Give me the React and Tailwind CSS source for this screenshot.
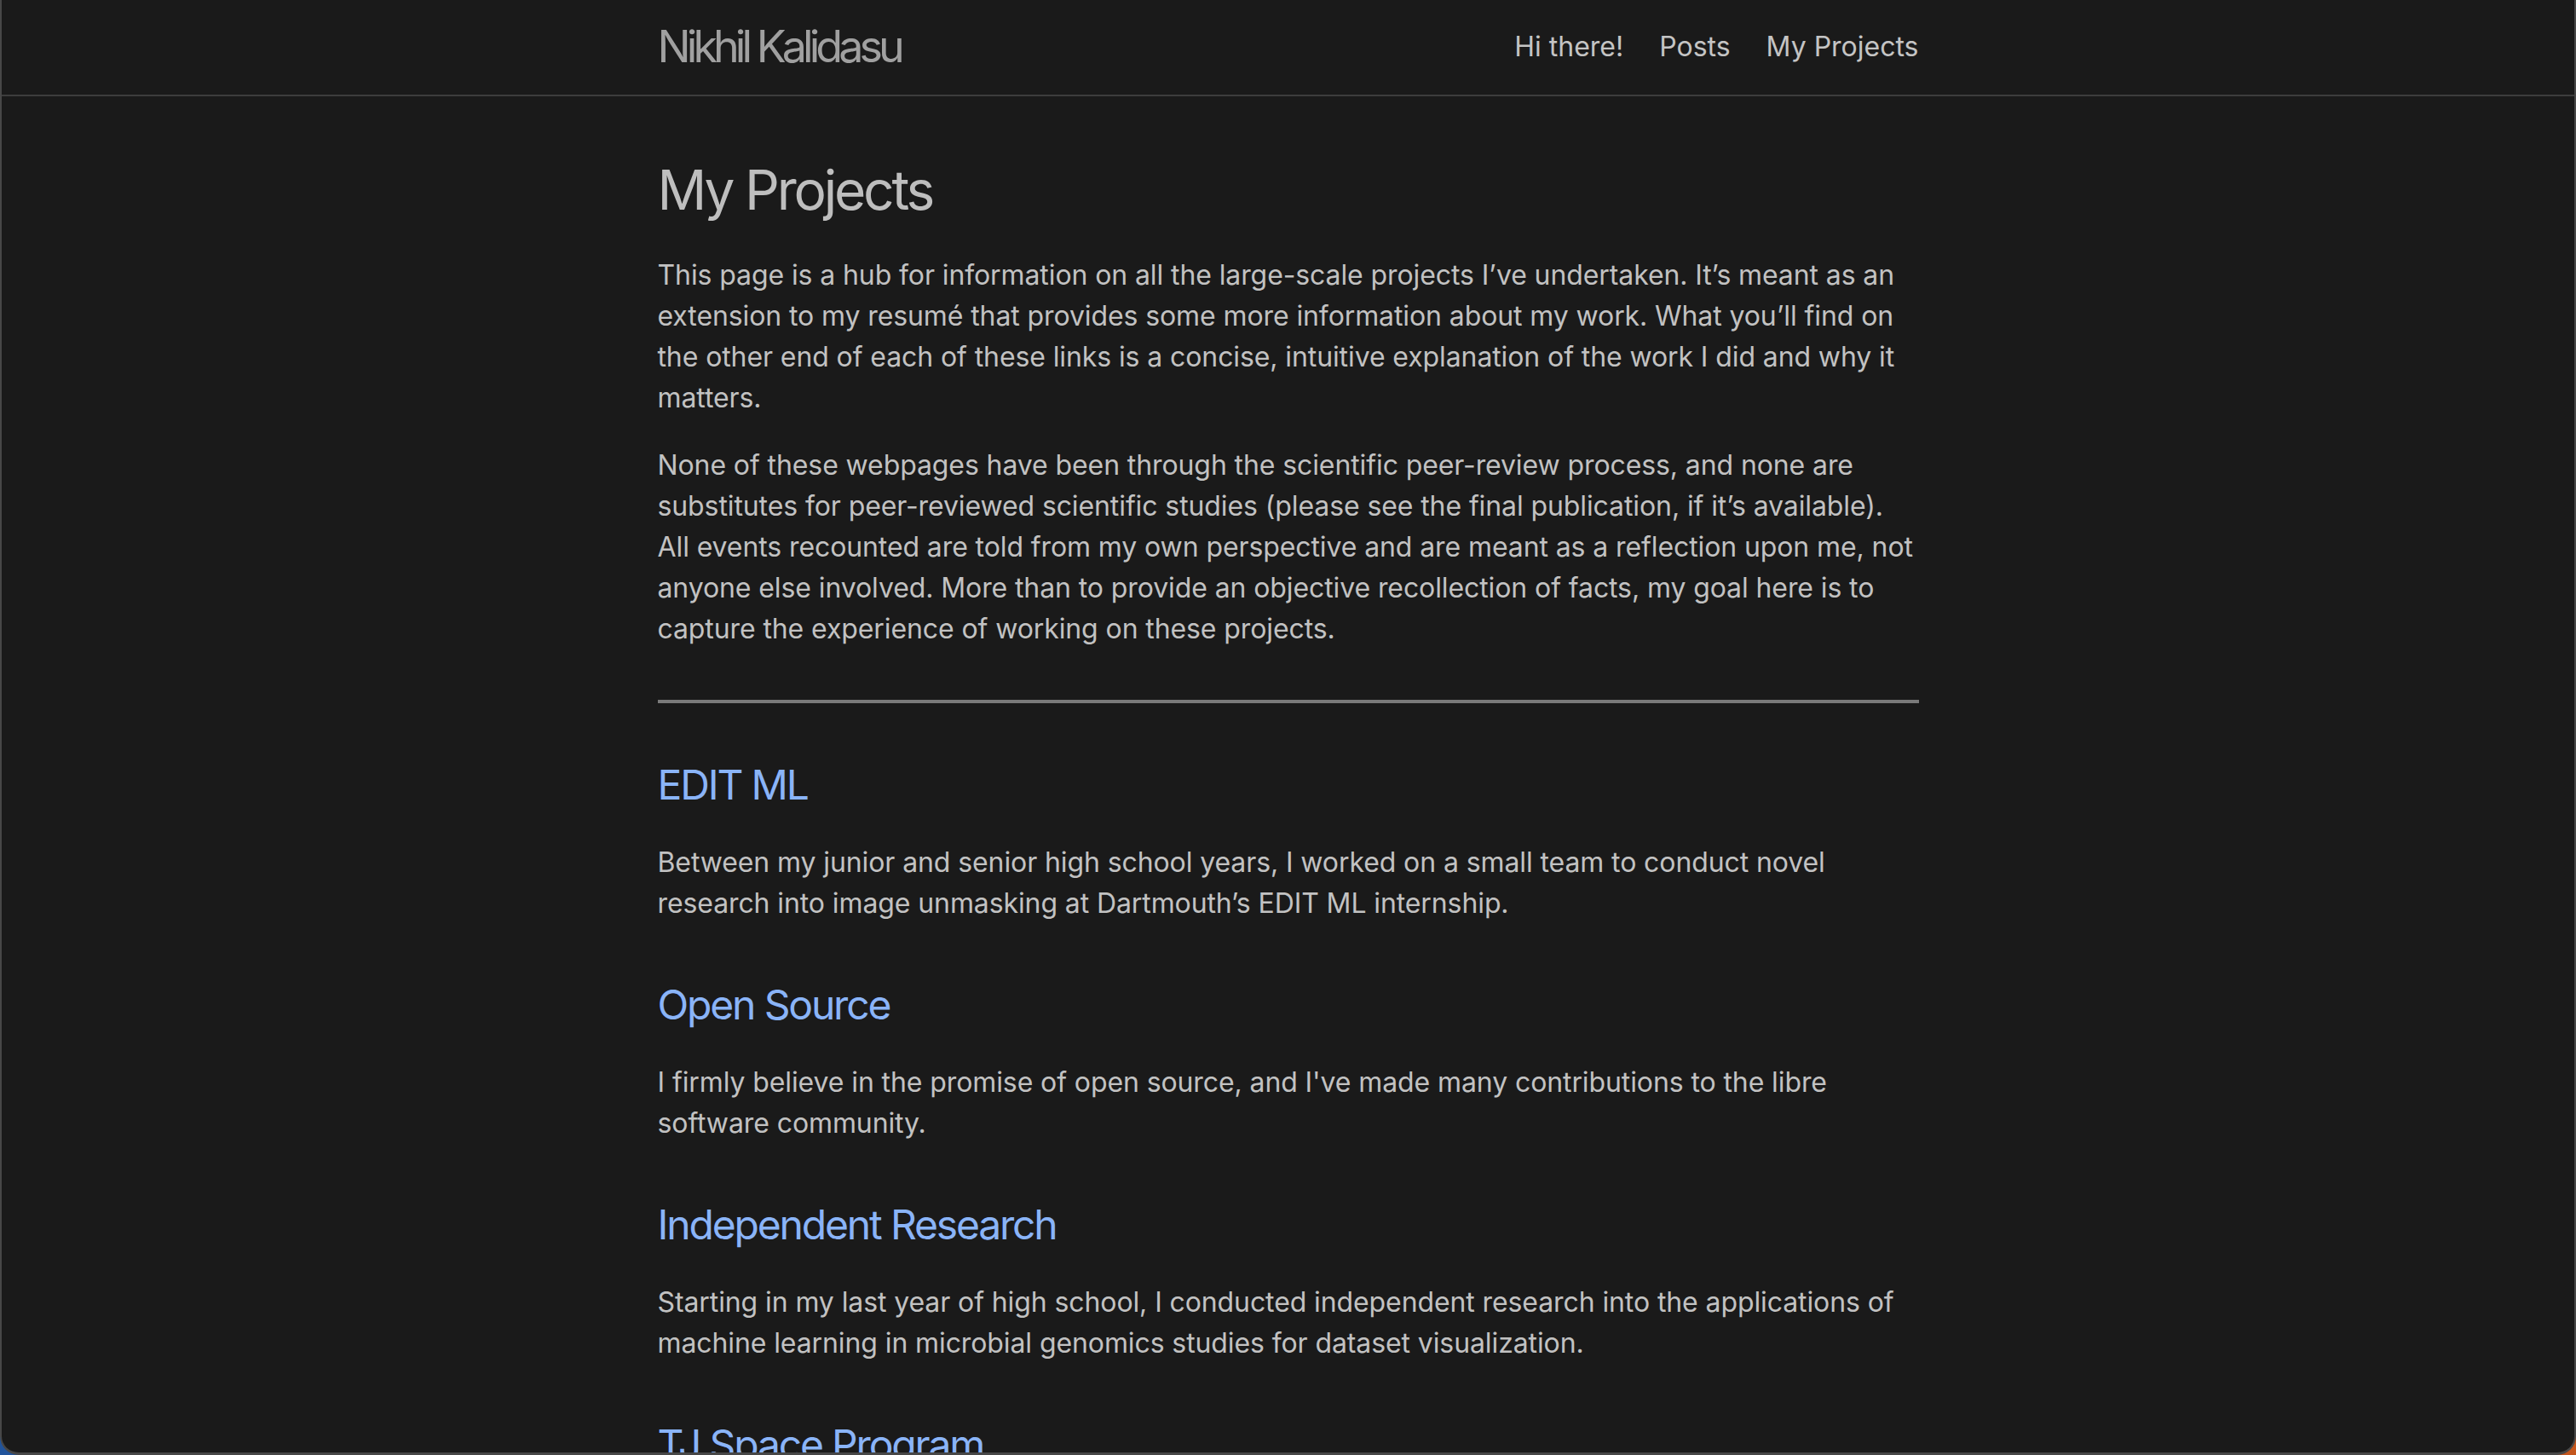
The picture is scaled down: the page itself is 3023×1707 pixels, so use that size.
import React from "react";

const sections = [
  {
    title: "EDIT ML",
    text: "Between my junior and senior high school years, I worked on a small team to conduct novel research into image unmasking at Dartmouth’s EDIT ML internship.",
  },
  {
    title: "Open Source",
    text: "I firmly believe in the promise of open source, and I've made many contributions to the libre software community.",
  },
  {
    title: "Independent Research",
    text: "Starting in my last year of high school, I conducted independent research into the applications of machine learning in microbial genomics studies for dataset visualization.",
  },
  {
    title: "TJ Space Program",
    text: "As a member of the TJ Space Program, I helped design and build satellites.",
  },
];

export default function App() {
  return (
    <div className="w-[3023px] h-[1707px] overflow-hidden bg-gradient-to-r from-[#21549c] via-[#5a4a6a] to-[#c4561c] font-[Inter,sans-serif]">
      <div className="w-full h-full bg-[#1a1a1a] border-l-2 border-r-2 border-b-[3px] border-[#474747] rounded-b-[22px] overflow-hidden flex flex-col">
        <header className="h-[113px] shrink-0 border-b-2 border-[#3d3d3d] pb-[2px]">
          <div className="w-[1480px] mx-auto h-full flex items-center justify-between">
            <a className="text-[52px] leading-none tracking-[-0.095em] text-[#a0a0a0]">Nikhil Kalidasu</a>
            <nav className="flex items-center gap-[42px] text-[32px] leading-none text-[#c4c4c4]">
              <a>Hi there!</a>
              <a>Posts</a>
              <a>My Projects</a>
            </nav>
          </div>
        </header>
        <main className="w-[1480px] mx-auto flex flex-col text-[#c2c2c2] tracking-[-0.1px]">
          <h1 className="mt-[71px] text-[64px] leading-[77px] tracking-[-0.05em] text-[#bebebe]">My Projects</h1>
          <p className="mt-[38px] text-[32px] leading-[48px]">
            This page is a hub for information on all the large-scale projects I’ve undertaken. It’s meant as an extension to my resumé that provides some more information about my work. What you’ll find on the other end of each of these links is a concise, intuitive explanation of the work I did and why it matters.
          </p>
          <p className="mt-[31px] text-[32px] leading-[48px]">
            None of these webpages have been through the scientific peer-review process, and none are substitutes for peer-reviewed scientific studies (please see the final publication, if it’s available). All events recounted are told from my own perspective and are meant as a reflection upon me, not anyone else involved. More than to provide an objective recollection of facts, my goal here is to capture the experience of working on these projects.
          </p>
          <div className="mt-[59px] h-[4px] bg-[#7a7a7a]" />
          {sections.map((s, i) => (
            <section key={s.title} className="flex flex-col">
              <h2 className={(i === 0 ? "mt-[67px]" : "mt-[66px]") + " text-[48px] leading-[58px] tracking-[-0.045em] text-[#8ab4f8]"}>
                <a>{s.title}</a>
              </h2>
              <p className="mt-[38px] text-[32px] leading-[48px]">{s.text}</p>
            </section>
          ))}
        </main>
      </div>
    </div>
  );
}
